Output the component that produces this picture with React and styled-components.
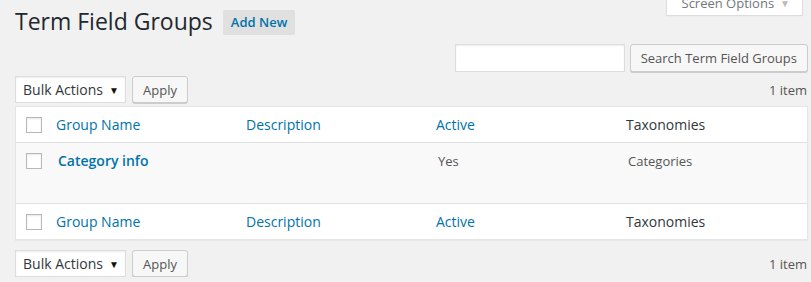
import React from "react";
import styled, { createGlobalStyle } from "styled-components";

const GlobalStyle = createGlobalStyle`
  body {
    margin: 0;
    background: #f1f1f1;
    font-family: "Open Sans", "Noto Sans", sans-serif;
    color: #444;
    font-size: 13px;
  }
`;

const Wrap = styled.div`
  padding: 0 3px 0 15px;
`;

const Header = styled.div`
  display: flex;
  justify-content: space-between;
  align-items: flex-start;
`;

const TitleRow = styled.div`
  display: flex;
  align-items: center;
  padding: 7px 0 8px;
`;

const Title = styled.h1`
  margin: 0;
  font-size: 23px;
  font-weight: 400;
  line-height: 29px;
  color: #23282d;
`;

const AddNew = styled.a`
  margin-left: 10px;
  margin-top: 1px;
  height: 25px;
  line-height: 25px;
  padding: 0 8px;
  background: #e0e0e0;
  border-radius: 2px;
  color: #0073aa;
  font-size: 13px;
  font-weight: 600;
  text-decoration: none;
`;

const ScreenTab = styled.div`
  margin: -11px 5px 0 0;
  height: 27px;
  box-sizing: border-box;
  padding: 8px 12px 0 15px;
  background: #fff;
  border: 1px solid #ddd;
  border-top: none;
  box-shadow: 0 1px 1px -1px rgba(0, 0, 0, 0.1);
  color: #72777c;
  font-size: 13px;
  line-height: 13px;
  display: flex;
  gap: 6px;
  span {
    color: #bbb;
    font-size: 10px;
  }
`;

const SearchRow = styled.div`
  display: flex;
  justify-content: flex-end;
  gap: 5px;
`;

const SearchInput = styled.div`
  width: 170px;
  height: 28px;
  box-sizing: border-box;
  background: #fff;
  border: 1px solid #ddd;
  box-shadow: inset 0 1px 2px rgba(0, 0, 0, 0.07);
`;

const Button = styled.div`
  height: ${({ $h }) => $h || 28}px;
  box-sizing: border-box;
  padding: 0 ${({ $pad }) => $pad || 10}px;
  display: flex;
  align-items: center;
  background: #f7f7f7;
  border: 1px solid #ccc;
  border-radius: 3px;
  box-shadow: 0 1px 0 #ccc;
  color: #555;
  font-size: 13px;
  white-space: nowrap;
`;

const TableNav = styled.div`
  display: flex;
  align-items: center;
  justify-content: space-between;
  margin: ${({ $bottom }) => ($bottom ? "10px 0 0" : "4px 0 3px")};
`;

const Actions = styled.div`
  display: flex;
  gap: 6px;
  align-items: center;
`;

const Select = styled.div`
  width: 111px;
  height: 27px;
  box-sizing: border-box;
  display: flex;
  align-items: center;
  justify-content: space-between;
  padding: 0 6px 0 7px;
  background: #fff;
  border: 1px solid #ddd;
  box-shadow: inset 0 1px 2px rgba(0, 0, 0, 0.07);
  color: #32373c;
  font-size: 14px;
  span {
    font-size: 10px;
    color: #111;
  }
`;

const Count = styled.div`
  color: #555;
  font-size: 13px;
  padding-right: 1px;
`;

const Table = styled.div`
  background: #fff;
  border: 1px solid #e5e5e5;
  box-shadow: 0 1px 1px rgba(0, 0, 0, 0.04);
`;

const Row = styled.div`
  display: grid;
  grid-template-columns: 30px 190px 190px 190px 1fr;
  align-items: ${({ $body }) => ($body ? "start" : "center")};
  min-height: ${({ $body }) => ($body ? 60 : 35)}px;
  background: ${({ $body }) => ($body ? "#f9f9f9" : "#fff")};
  border-bottom: ${({ $head }) => ($head ? "1px solid #e1e1e1" : "none")};
  border-top: ${({ $foot }) => ($foot ? "1px solid #e1e1e1" : "none")};
`;

const CheckCell = styled.div`
  padding: ${({ $body }) => ($body ? "10px 0 0 10px" : "0 0 0 10px")};
  display: flex;
`;

const Checkbox = styled.div`
  width: 16px;
  height: 16px;
  box-sizing: border-box;
  border: 1px solid #b4b9be;
  background: #fff;
  box-shadow: inset 0 1px 2px rgba(0, 0, 0, 0.1);
`;

const HeadCell = styled.div`
  padding: 0 10px;
  font-size: 14px;
  color: ${({ $link }) => ($link ? "#0073aa" : "#32373c")};
`;

const Cell = styled.div`
  padding: 9px 12px 0;
  font-size: 13px;
  line-height: 19px;
  color: #555;
`;

const RowTitle = styled.a`
  display: block;
  padding: 8px 12px 0;
  font-size: 14px;
  line-height: 19px;
  font-weight: 600;
  color: #0073aa;
  text-decoration: none;
`;

const columns = [
  { label: "Group Name", link: true },
  { label: "Description", link: true },
  { label: "Active", link: true },
  { label: "Taxonomies", link: false },
];

function HeadRow(props) {
  return (
    <Row {...props}>
      <CheckCell>
        <Checkbox />
      </CheckCell>
      {columns.map((c) => (
        <HeadCell key={c.label} $link={c.link}>
          {c.label}
        </HeadCell>
      ))}
    </Row>
  );
}

function Nav({ bottom }) {
  return (
    <TableNav $bottom={bottom}>
      <Actions>
        <Select>
          Bulk Actions <span>▼</span>
        </Select>
        <Button $h={27} $pad={10}>
          Apply
        </Button>
      </Actions>
      <Count>1 item</Count>
    </TableNav>
  );
}

export default function App() {
  return (
    <Wrap>
      <GlobalStyle />
      <Header>
        <TitleRow>
          <Title>Term Field Groups</Title>
          <AddNew>Add New</AddNew>
        </TitleRow>
        <ScreenTab>
          Screen Options <span>▼</span>
        </ScreenTab>
      </Header>
      <SearchRow>
        <SearchInput />
        <Button $pad={10}>Search Term Field Groups</Button>
      </SearchRow>
      <Nav />
      <Table>
        <HeadRow $head />
        <Row $body>
          <CheckCell $body>
            <Checkbox />
          </CheckCell>
          <RowTitle>Category info</RowTitle>
          <Cell />
          <Cell>Yes</Cell>
          <Cell>Categories</Cell>
        </Row>
        <HeadRow $foot />
      </Table>
      <Nav bottom />
    </Wrap>
  );
}
